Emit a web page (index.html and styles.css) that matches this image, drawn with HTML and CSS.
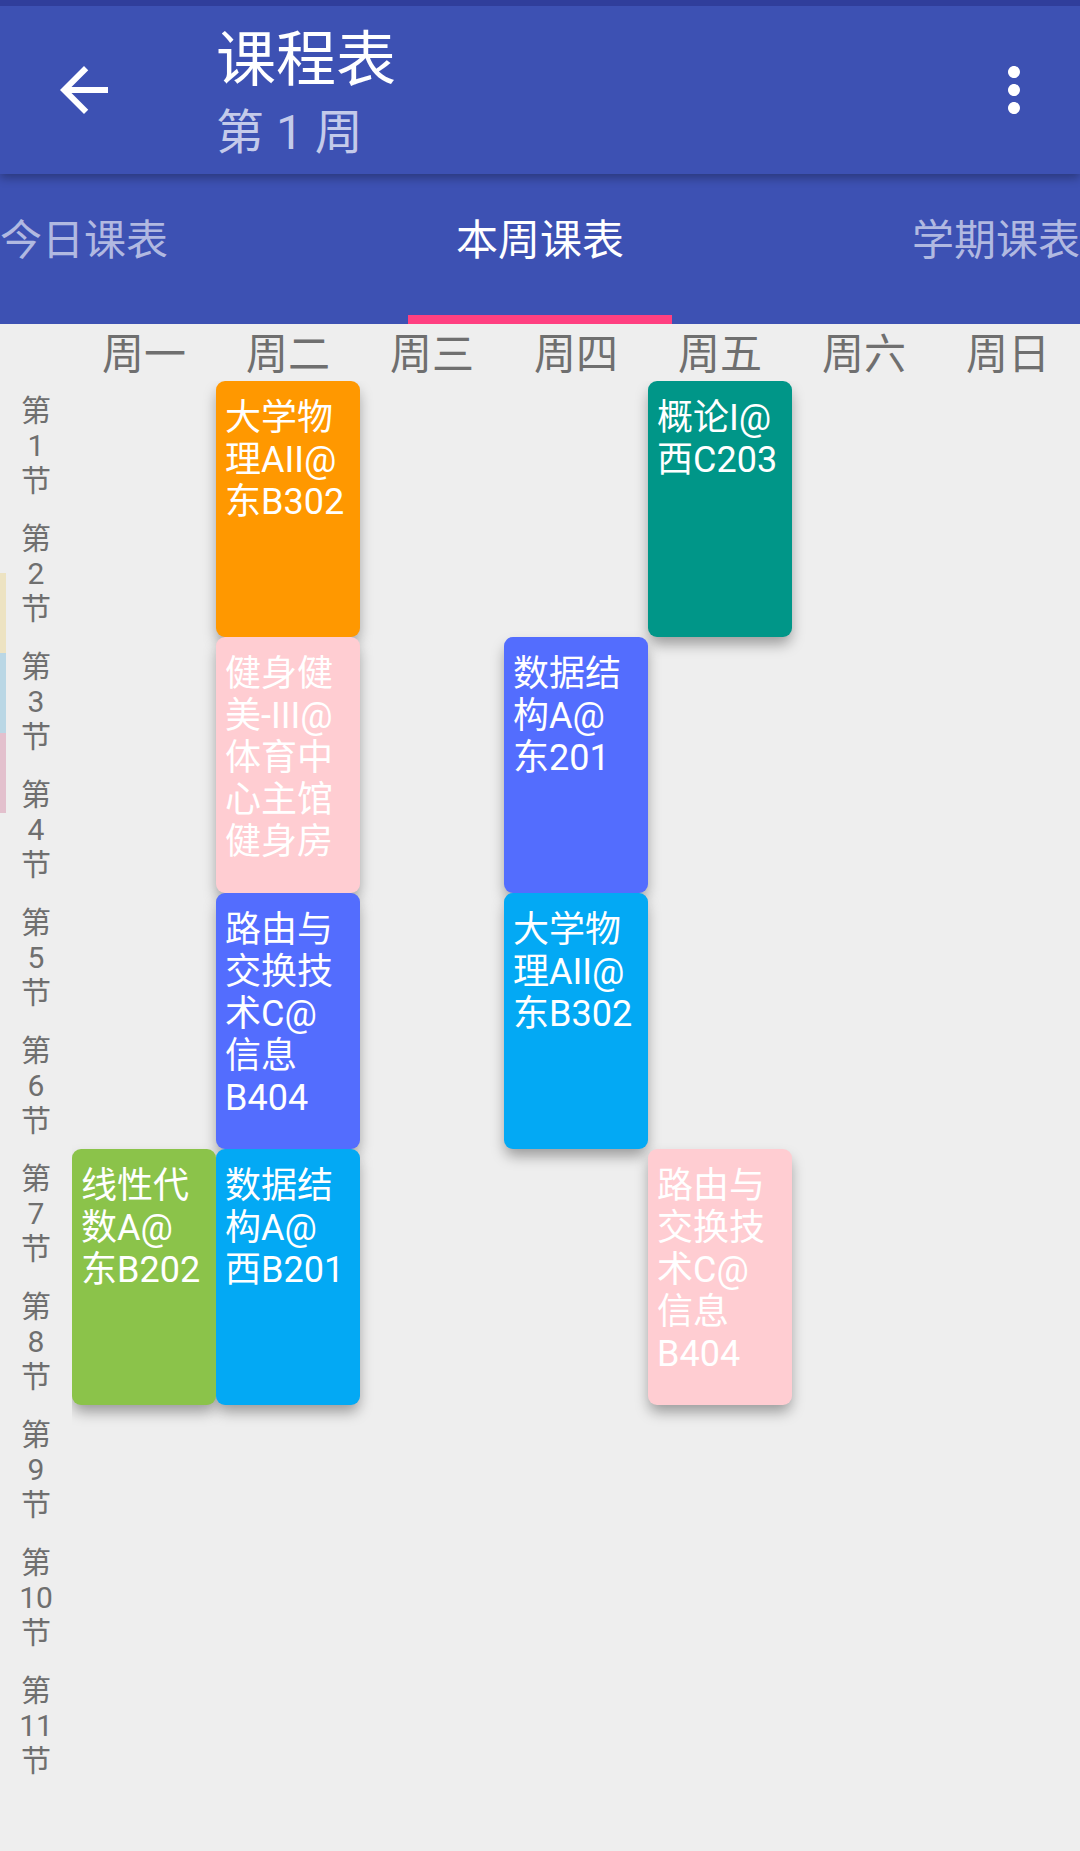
FILE: index.html
```html
<!DOCTYPE html>
<html lang="zh-CN">
<head>
<meta charset="utf-8">
<meta name="viewport" content="width=device-width, initial-scale=1">
<title>课程表</title>
<link rel="stylesheet" href="styles.css">
</head>
<body>
<header class="toolbar">
  <button class="icon-button" type="button" aria-label="返回">
    <svg class="icon" viewBox="0 0 24 24" aria-hidden="true"><path d="M20 11H7.83l5.59-5.59L12 4l-8 8 8 8 1.41-1.41L7.83 13H20v-2z"/></svg>
  </button>
  <div class="heading">
    <h1 class="title">课程表</h1>
    <p class="subtitle">第 1 周</p>
  </div>
  <button class="icon-button" type="button" aria-label="更多选项">
    <svg class="icon" viewBox="0 0 24 24" aria-hidden="true"><path d="M12 8c1.1 0 2-.9 2-2s-.9-2-2-2-2 .9-2 2 .9 2 2 2zm0 2c-1.1 0-2 .9-2 2s.9 2 2 2 2-.9 2-2-.9-2-2-2zm0 6c-1.1 0-2 .9-2 2s.9 2 2 2 2-.9 2-2-.9-2-2-2z"/></svg>
  </button>
</header>
<nav class="tabs">
  <a class="tab" href="#today">今日课表</a>
  <a class="tab tab-active" href="#week" aria-current="page">本周课表</a>
  <a class="tab" href="#term">学期课表</a>
</nav>
<main>
  <table class="timetable">
    <thead>
      <tr><td class="corner"></td><th scope="col">周一</th><th scope="col">周二</th><th scope="col">周三</th><th scope="col">周四</th><th scope="col">周五</th><th scope="col">周六</th><th scope="col">周日</th></tr>
    </thead>
    <tbody>
      <tr><th scope="row">第<br>1<br>节</th><td></td><td rowspan="2"><div class="course orange">大学物理AII@东B302</div></td><td></td><td></td><td rowspan="2"><div class="course teal">概论I@西C203</div></td><td></td><td></td></tr>
      <tr><th scope="row">第<br>2<br>节</th><td></td><td></td><td></td><td></td><td></td></tr>
      <tr><th scope="row">第<br>3<br>节</th><td></td><td rowspan="2"><div class="course pink">健身健美-III@体育中心主馆健身房</div></td><td></td><td rowspan="2"><div class="course indigo">数据结构A@东201</div></td><td></td><td></td><td></td></tr>
      <tr><th scope="row">第<br>4<br>节</th><td></td><td></td><td></td><td></td><td></td></tr>
      <tr><th scope="row">第<br>5<br>节</th><td></td><td rowspan="2"><div class="course indigo">路由与交换技术C@信息B404</div></td><td></td><td rowspan="2"><div class="course blue">大学物理AII@东B302</div></td><td></td><td></td><td></td></tr>
      <tr><th scope="row">第<br>6<br>节</th><td></td><td></td><td></td><td></td><td></td></tr>
      <tr><th scope="row">第<br>7<br>节</th><td rowspan="2"><div class="course green">线性代数A@东B202</div></td><td rowspan="2"><div class="course blue">数据结构A@西B201</div></td><td></td><td></td><td rowspan="2"><div class="course pink">路由与交换技术C@信息B404</div></td><td></td><td></td></tr>
      <tr><th scope="row">第<br>8<br>节</th><td></td><td></td><td></td><td></td></tr>
      <tr><th scope="row">第<br>9<br>节</th><td></td><td></td><td></td><td></td><td></td><td></td><td></td></tr>
      <tr><th scope="row">第<br>10<br>节</th><td></td><td></td><td></td><td></td><td></td><td></td><td></td></tr>
      <tr><th scope="row">第<br>11<br>节</th><td></td><td></td><td></td><td></td><td></td><td></td><td></td></tr>
    </tbody>
  </table>
</main>
<div class="edge-handle" aria-hidden="true">
  <span class="edge-sand"></span>
  <span class="edge-sky"></span>
  <span class="edge-rose"></span>
</div>
</body>
</html>
```

FILE: styles.css
```css
* {
  box-sizing: border-box;
}

body {
  margin: 0;
  background: #eee;
  color: #6f6f6f;
  font-family: Roboto, "Noto Sans CJK SC", sans-serif;
}

/* Toolbar */
.toolbar {
  position: relative;
  display: flex;
  align-items: center;
  height: 174px;
  padding: 0 30px 0 48px;
  border-top: 6px solid #303e9b;
  background: #3d51b3;
  color: #fff;
  box-shadow: 0 4px 9px rgba(0, 0, 0, 0.3);
}

.icon-button {
  display: flex;
  padding: 0;
  border: 0;
  background: none;
  color: inherit;
}

.icon {
  width: 72px;
  height: 72px;
  fill: currentColor;
}

.heading {
  flex: 1;
  padding-top: 10px;
  padding-left: 96px;
}

.title {
  margin: 0;
  font-size: 60px;
  font-weight: 400;
  line-height: 76px;
}

.subtitle {
  margin: 0;
  color: #c4caea;
  font-size: 48px;
  line-height: 68px;
}

/* Tabs */
.tabs {
  display: flex;
  justify-content: space-between;
  height: 150px;
  background: #3d51b3;
}

.tab {
  padding-top: 42px;
  border-bottom: 9px solid transparent;
  color: #b1b9e1;
  font-size: 42px;
  line-height: 50px;
  text-decoration: none;
}

.tab-active {
  padding-left: 48px;
  padding-right: 48px;
  border-bottom-color: #ff4081;
  color: #fff;
}

/* Timetable */
.timetable {
  width: 100%;
  border-spacing: 0;
  table-layout: fixed;
  isolation: isolate;
}

.timetable th,
.timetable td {
  padding: 0;
  font-weight: 400;
}

.timetable td {
  vertical-align: top;
}

.timetable .corner {
  width: 72px;
}

.timetable thead th {
  height: 57px;
  padding-top: 5px;
  background: #eee;
  font-size: 42px;
  line-height: 52px;
}

.timetable tbody th {
  height: 128px;
  background: #eee;
  font-size: 30px;
  line-height: 35px;
}

.course {
  position: relative;
  min-height: 256px;
  padding: 16px 9px;
  border-radius: 9px;
  color: #fff;
  font-size: 36px;
  line-height: 42px;
}

/* The shadow sits beneath every card, so it never darkens a neighbour */
.course::before {
  content: "";
  position: absolute;
  inset: 1px;
  z-index: -1;
  border-radius: inherit;
  box-shadow: 0 8px 14px rgba(0, 0, 0, 0.35);
}

.orange { background: #ff9800; }
.teal { background: #009688; }
.pink { background: #ffcdd2; }
.indigo { background: #536dfe; }
.blue { background: #03a9f4; }
.green { background: #8bc34a; }

/* Side panel handle floating over the left edge */
.edge-handle {
  position: absolute;
  top: 573px;
  left: 0;
  display: grid;
  grid-auto-rows: 80px;
  width: 6px;
}

.edge-sand { background: #ede3c2; }
.edge-sky { background: #bad7e5; }
.edge-rose { background: #e3c0cd; }
```
